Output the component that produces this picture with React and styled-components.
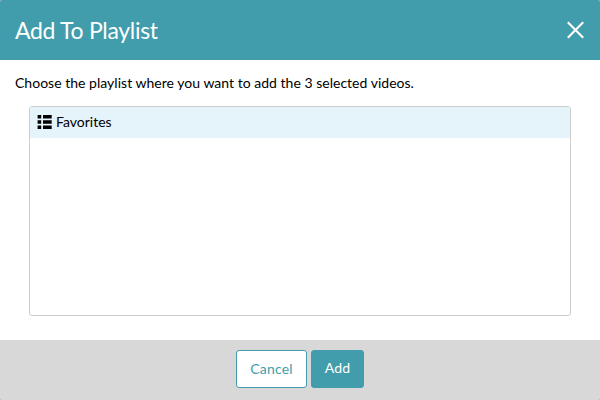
import React from "react";
import styled, { createGlobalStyle } from "styled-components";

const GlobalStyle = createGlobalStyle`
  *, *::before, *::after { box-sizing: border-box; }
  body {
    margin: 0;
    background: #75878a;
    font-family: Lato, "Liberation Sans", sans-serif;
    font-size: 14px;
    color: #000;
  }
`;

const Dialog = styled.div`
  width: 600px;
  height: 400px;
  display: flex;
  flex-direction: column;
  overflow: hidden;
  border-radius: 2px;
  background: #fff;
`;

const Header = styled.header`
  height: 60px;
  padding: 0 16px 0 15px;
  display: flex;
  align-items: center;
  justify-content: space-between;
  background: #419cab;
  color: #fff;
`;

const Title = styled.h1`
  margin: 0;
  font-size: 23px;
  font-weight: 400;
  line-height: 28px;
  letter-spacing: -0.3px;
`;

const CloseButton = styled.button`
  display: flex;
  padding: 0;
  border: 0;
  background: none;
  color: inherit;
`;

const Content = styled.main`
  flex: 1;
  padding: 13px 15px 24px;
  display: flex;
  flex-direction: column;
`;

const Message = styled.p`
  margin: 0 0 13px;
  line-height: 20px;
  letter-spacing: 0.02px;
`;

const Playlists = styled.ul`
  flex: 1;
  margin: 0 14px;
  padding: 0;
  list-style: none;
  border: 1px solid #ccc;
  border-radius: 3px;
`;

const Playlist = styled.li`
  height: 31px;
  padding: 0 7px 1px;
  display: flex;
  align-items: center;
  gap: 4px;
  background: #e5f3fa;
  line-height: 18px;
`;

const Footer = styled.footer`
  height: 60px;
  padding-top: 10px;
  display: flex;
  justify-content: center;
  gap: 4px;
  background: #d8d8d8;
`;

const Button = styled.button`
  width: ${(p) => (p.$primary ? 53 : 71)}px;
  height: 38px;
  padding: ${(p) => (p.$primary ? "0 0 3px" : "0 0 1px")};
  border: 1px solid #419cab;
  border-radius: 3px;
  background: ${(p) => (p.$primary ? "#419cab" : "#fff")};
  color: ${(p) => (p.$primary ? "#fff" : "#419cab")};
  font: inherit;
  letter-spacing: 0.15px;
`;

const CloseIcon = () => (
  <svg width="17" height="18" viewBox="0 0 17 18" fill="none" stroke="currentColor" strokeWidth="2.1">
    <path d="M0.8 1.3 16.2 16.7M16.2 1.3 0.8 16.7" />
  </svg>
);

const ListIcon = () => (
  <svg width="15" height="14" viewBox="0 0 15 14" fill="currentColor">
    <path d="M0.6 0h3.6v3.6h-3.6zM6 0h8.7v3.6h-8.7zM0.6 5.2h3.6v3.6h-3.6zM6 5.2h8.7v3.6h-8.7zM0.6 10.4h3.6v3.6h-3.6zM6 10.4h8.7v3.6h-8.7z" />
  </svg>
);

export default function App() {
  return (
    <>
      <GlobalStyle />
      <Dialog role="dialog">
        <Header>
          <Title>Add To Playlist</Title>
          <CloseButton aria-label="Close"><CloseIcon /></CloseButton>
        </Header>
        <Content>
          <Message>Choose the playlist where you want to add the 3 selected videos.</Message>
          <Playlists>
            <Playlist><ListIcon /><span>Favorites</span></Playlist>
          </Playlists>
        </Content>
        <Footer>
          <Button>Cancel</Button>
          <Button $primary>Add</Button>
        </Footer>
      </Dialog>
    </>
  );
}
